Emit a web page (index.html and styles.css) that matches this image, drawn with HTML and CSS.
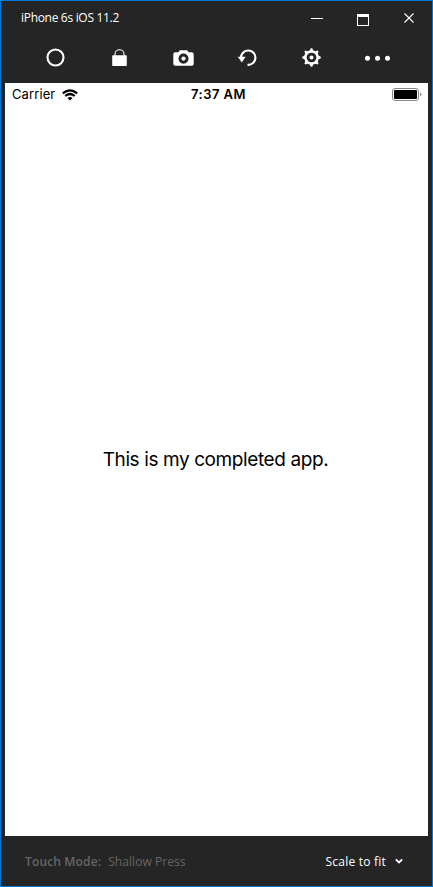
FILE: index.html
```html
<!DOCTYPE html>
<html lang="en">
<head>
<meta charset="utf-8">
<title>iPhone 6s iOS 11.2</title>
<link rel="stylesheet" href="styles.css">
</head>
<body>
<div class="window">
  <header class="titlebar">
    <span class="title">iPhone 6s iOS 11.2</span>
    <div class="controls">
      <svg width="12" height="14" viewBox="0 0 12 14"><path d="M0 6.500h12" stroke="#fff"/></svg>
      <svg width="12" height="14" viewBox="0 0 12 14"><path d="M0 2h12v12H0zM1 5v8h10V5z" fill="#fff" fill-rule="evenodd"/></svg>
      <svg width="10" height="14" viewBox="0 0 10 14"><path d="M.5 1.500l9 9M9.500 1.500l-9 9" stroke="#fff" stroke-width="1.100"/></svg>
    </div>
  </header>
  <nav class="toolbar">
    <svg width="24" height="24" viewBox="0 0 24 24"><circle cx="12.500" cy="11.500" r="8" fill="none" stroke="#fff" stroke-width="2.100"/></svg>
    <svg width="24" height="24" viewBox="0 0 24 24"><path d="M8 10V8.200a4.500 4.500 0 0 1 9 0V10" fill="none" stroke="#ddd" stroke-width="1.300"/><rect x="5.200" y="9.300" width="14.600" height="10.600" rx=".7" fill="#fff"/></svg>
    <svg width="24" height="24" viewBox="0 0 24 24"><path d="M4.300 6.200h3l1.500-2h7.400l1.500 2h3q2 0 2 2v9.600q0 2-2 2H4.300q-2 0-2-2V8.200q0-2 2-2z" fill="#fff"/><circle cx="12.500" cy="12.600" r="3.600" fill="none" stroke="#252525" stroke-width="2.900"/></svg>
    <svg width="24" height="24" viewBox="0 0 24 24"><path d="M6.100 12.500A7.200 7.200 0 1 1 12.500 18.800" fill="none" stroke="#fff" stroke-width="2.100"/><path d="M2.800 10.800h7.800l-3.800 5.600z" fill="#fff"/></svg>
    <svg width="24" height="24" viewBox="0 0 24 24"><g transform="translate(12.500 11.500)"><circle r="6.100" fill="none" stroke="#fff" stroke-width="2.500"/><circle r="2" fill="#fff"/><path id="teeth" d="M-2-6.500L-.7-9.300H.7L2-6.500zM-2 6.500L-.7 9.300H.7L2 6.500zM-6.500-2L-9.300-.7V.7L-6.500 2zM6.500-2L9.300-.7V.7L6.500 2z" fill="#fff"/><use href="#teeth" transform="rotate(45)"/></g></svg>
    <svg width="30" height="24" viewBox="0 0 30 24"><g fill="#fff"><circle cx="4.500" cy="12.300" r="2.500"/><circle cx="14.500" cy="12.300" r="2.500"/><circle cx="24.500" cy="12.300" r="2.500"/></g></svg>
  </nav>
  <main class="screen">
    <div class="status">
      <div class="carrier"><span>Carrier</span>
        <svg width="16" height="12" viewBox="0 0 16 12"><g fill="none" stroke="#000" stroke-width="2.200"><path d="M.8 4.300Q8-1.700 15.200 4.300"/><path d="M3.300 7Q8 3 12.700 7"/></g><path d="M5.500 8.900Q8 7 10.500 8.900L8 11.500z"/></svg>
      </div>
      <span class="time">7:37 AM</span>
      <svg class="battery" width="30" height="13" viewBox="0 0 30 13"><rect x=".5" y=".5" width="26" height="12" rx="2.500" fill="none" stroke="#888"/><rect x="2" y="2" width="23" height="9" rx="1"/><path d="M28 4.500q1.500.4 1.500 2t-1.500 2z" fill="#888"/></svg>
    </div>
    <div class="content"><span class="message">This is my completed app.</span></div>
  </main>
  <footer class="footer">
    <div class="mode"><span class="mode-label">Touch Mode:</span><span class="mode-value">Shallow Press</span></div>
    <div class="scale"><span>Scale to fit</span><svg width="8" height="6" viewBox="0 0 8 6"><path d="M.8 1.400L4 4.400l3.200-3" fill="none" stroke="#fff" stroke-width="1.900"/></svg></div>
  </footer>
</div>
</body>
</html>
```
FILE: styles.css
```css
* { box-sizing: border-box; }
body { margin: 0; overflow: hidden; font-family: "Open Sans", "Noto Sans", sans-serif; }
svg { display: block; flex: none; }
span { white-space: nowrap; }
.window {
  width: 433px;
  height: 887px;
  border: 1px solid #0078d7;
  background: #252525;
  color: #fff;
  display: flex;
  flex-direction: column;
}
.titlebar {
  height: 35px;
  padding: 0 18px 0 20px;
  display: flex;
  justify-content: space-between;
}
.title { font-size: 12px; line-height: 33px; letter-spacing: -0.31px; }
.controls { display: flex; padding-top: 11px; }
.controls svg + svg { margin-left: 34px; }
.controls svg:last-child { margin-left: 35px; }
.toolbar {
  height: 47px;
  padding: 10px 0 0 42px;
  display: flex;
  gap: 40px;
}
.screen {
  height: 753px;
  margin: 0 4px;
  background: #fff;
  color: #000;
  font-family: Inter, sans-serif;
  display: flex;
  flex-direction: column;
}
.status {
  height: 23px;
  padding: 0 6px 0 7px;
  display: grid;
  grid-template-columns: 1fr auto 1fr;
  align-items: center;
  font-size: 13px;
  line-height: 23px;
}
.carrier { display: flex; align-items: center; gap: 7px; letter-spacing: 0.1px; }
.time { font-weight: 600; letter-spacing: 0.45px; padding-left: 3px; }
.battery { justify-self: end; }
.content {
  flex: 1;
  padding: 0 2px 24px 0;
  display: flex;
  align-items: center;
  justify-content: center;
}
.message { font-size: 19px; letter-spacing: -0.4px; }
.footer {
  flex: 1;
  padding: 0 29px 0 24px;
  display: flex;
  align-items: center;
  justify-content: space-between;
  font-size: 12px;
}
.mode { display: flex; gap: 7px; color: #666; }
.mode-label { font-weight: 600; letter-spacing: 0.15px; }
.mode-value { letter-spacing: 0.07px; }
.scale { display: flex; align-items: center; gap: 9px; letter-spacing: 0.22px; }
```
